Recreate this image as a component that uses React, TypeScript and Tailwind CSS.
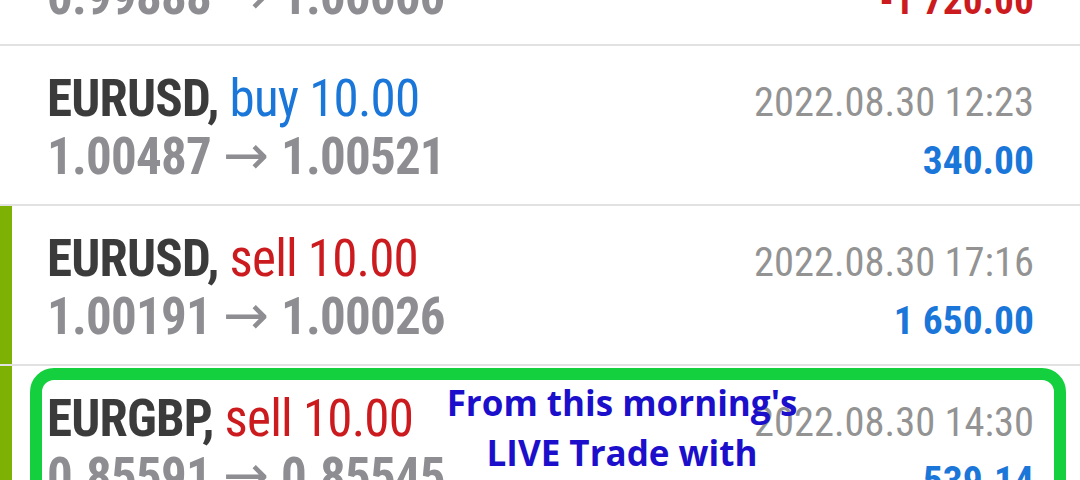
import React from 'react';

interface Trade {
  symbol: string;
  side: 'buy' | 'sell';
  volume: string;
  open: string;
  close: string;
  time: string;
  profit: string;
  marked?: boolean;
}

const trades: Trade[] = [
  { symbol: 'EURUSD', side: 'sell', volume: '10.00', open: '0.99888', close: '1.00000', time: '2022.08.30 10:05', profit: '-1 720.00', marked: false },
  { symbol: 'EURUSD', side: 'buy', volume: '10.00', open: '1.00487', close: '1.00521', time: '2022.08.30 12:23', profit: '340.00', marked: false },
  { symbol: 'EURUSD', side: 'sell', volume: '10.00', open: '1.00191', close: '1.00026', time: '2022.08.30 17:16', profit: '1 650.00', marked: true },
  { symbol: 'EURGBP', side: 'sell', volume: '10.00', open: '0.85591', close: '0.85545', time: '2022.08.30 14:30', profit: '539.14', marked: true },
];

const font = { fontFamily: '"Roboto Condensed", "Liberation Sans Narrow", Roboto, sans-serif' };
const arrowFont = { fontFamily: '"DejaVu Sans", sans-serif' };

const TradeRow: React.FC<{ trade: Trade }> = ({ trade }) => {
  const loss = trade.profit.startsWith('-');
  return (
    <div className="flex h-[160px] border-b-2 border-[#e2e2e2]">
      <div className={trade.marked ? 'w-[12px] shrink-0 bg-[#7db204]' : 'w-[12px] shrink-0'} />
      <div className="flex-1 pl-[35px] pr-[46px] pt-[25px]" style={font}>
        <div className="flex h-[56px] items-baseline justify-between leading-[56px]">
          <div className="text-[51px] tracking-[-0.8px] whitespace-nowrap">
            <span className="font-bold text-[#3b3b3b]">{trade.symbol},</span>{' '}
            <span className={trade.side === 'buy' ? 'text-[#1a76d8]' : 'text-[#cc1b1f]'}>
              {trade.side} {trade.volume}
            </span>
          </div>
          <div className="text-[40.5px] text-[#939393] whitespace-nowrap">{trade.time}</div>
        </div>
        <div className="flex h-[56px] items-baseline justify-between leading-[56px]">
          <div className="text-[51px] tracking-[-0.8px] text-[#8e8e92] whitespace-nowrap">
            <span className="font-bold">{trade.open}</span>
            <span className="mx-[12px] text-[55px] tracking-normal" style={arrowFont}>→</span>
            <span className="font-bold">{trade.close}</span>
          </div>
          <div className={`text-[39.5px] font-bold whitespace-nowrap ${loss ? 'text-[#cc1b1f]' : 'text-[#1a76d8]'}`}>
            {trade.profit}
          </div>
        </div>
      </div>
    </div>
  );
};

export default function App() {
  return (
    <div className="relative h-[480px] w-[1080px] overflow-hidden bg-white">
      <div className="mt-[-114px]">
        {trades.map((t, i) => (
          <TradeRow key={i} trade={t} />
        ))}
      </div>

      {/* highlight box drawn over the last trade */}
      <div className="absolute left-[30px] right-[14px] top-[368px] h-[160px] rounded-[24px] border-[12px] border-[#14d03e]" />

      <div
        className="absolute left-[422px] top-[378px] w-[400px] text-center text-[35px] font-bold leading-[50px] text-[#1c0fcb]"
        style={{ fontFamily: '"Open Sans", sans-serif' }}
      >
        From this morning's
        <br />
        LIVE Trade with
      </div>
    </div>
  );
}
